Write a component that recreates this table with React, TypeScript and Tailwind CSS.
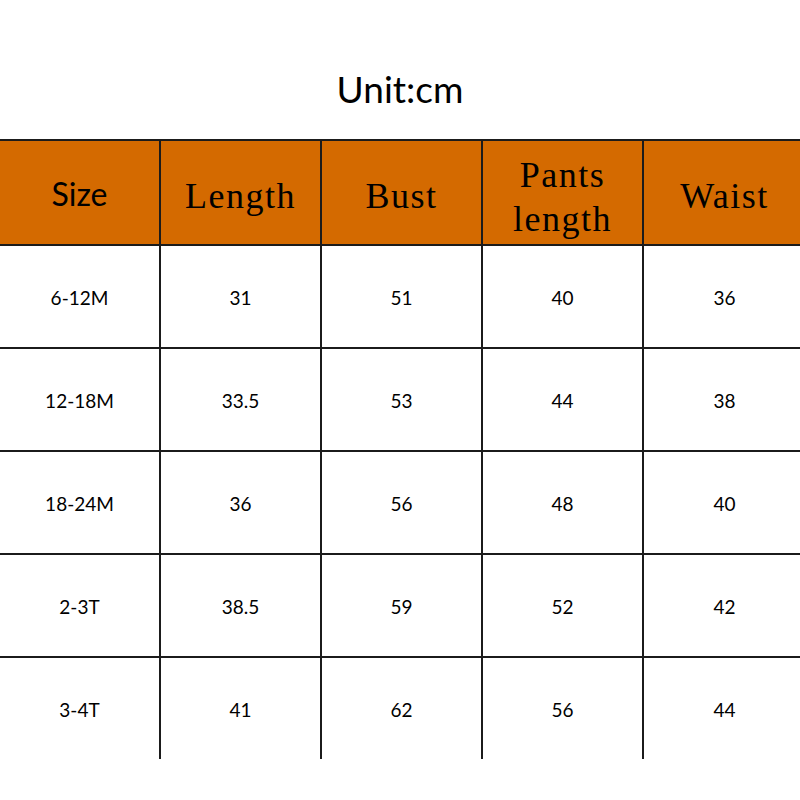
import React from "react";

const headers = ["Length", "Bust", "Pants\nlength", "Waist"];
const rows = [
  ["6-12M", "31", "51", "40", "36"],
  ["12-18M", "33.5", "53", "44", "38"],
  ["18-24M", "36", "56", "48", "40"],
  ["2-3T", "38.5", "59", "52", "42"],
  ["3-4T", "41", "62", "56", "44"],
];

const cols = "grid grid-cols-[161px_161px_161px_161px_161px]";

export default function App() {
  return (
    <div className="w-[800px] h-[800px] bg-white overflow-hidden text-black">
      <div className="h-[139px] pt-[66px] text-center text-[37px] leading-[46px] font-['Lato',sans-serif]">
        Unit:cm
      </div>
      <div className={`${cols} w-[805px] border-t-2 border-[#1b1b1b]`}>
        <div className="h-[105px] bg-[#d46a00] border-r-2 border-b-2 border-[#1b1b1b] flex items-center justify-center text-[32px] font-['Lato',sans-serif] pt-[2px]">
          Size
        </div>
        {headers.map((h, i) => (
          <div
            key={h}
            className={`h-[105px] bg-[#d46a00] border-b-2 border-[#1b1b1b] ${i < 3 ? "border-r-2" : ""} flex items-center justify-center text-center whitespace-pre-line text-[36px] leading-[44px] tracking-[1.5px] font-['Liberation_Serif',serif] ${i === 2 ? "pt-[8px]" : "pt-[6px]"}`}
          >
            {h}
          </div>
        ))}
        {rows.map((r, ri) =>
          r.map((c, ci) => (
            <div
              key={`${ri}-${ci}`}
              className={`${ri < 4 ? "h-[103px] border-b-2" : "h-[101px]"} ${ci < 4 ? "border-r-2" : ""} border-[#1b1b1b] flex items-center justify-center text-[19px] font-['Lato',sans-serif] pt-[3px]`}
            >
              {c}
            </div>
          ))
        )}
      </div>
    </div>
  );
}
